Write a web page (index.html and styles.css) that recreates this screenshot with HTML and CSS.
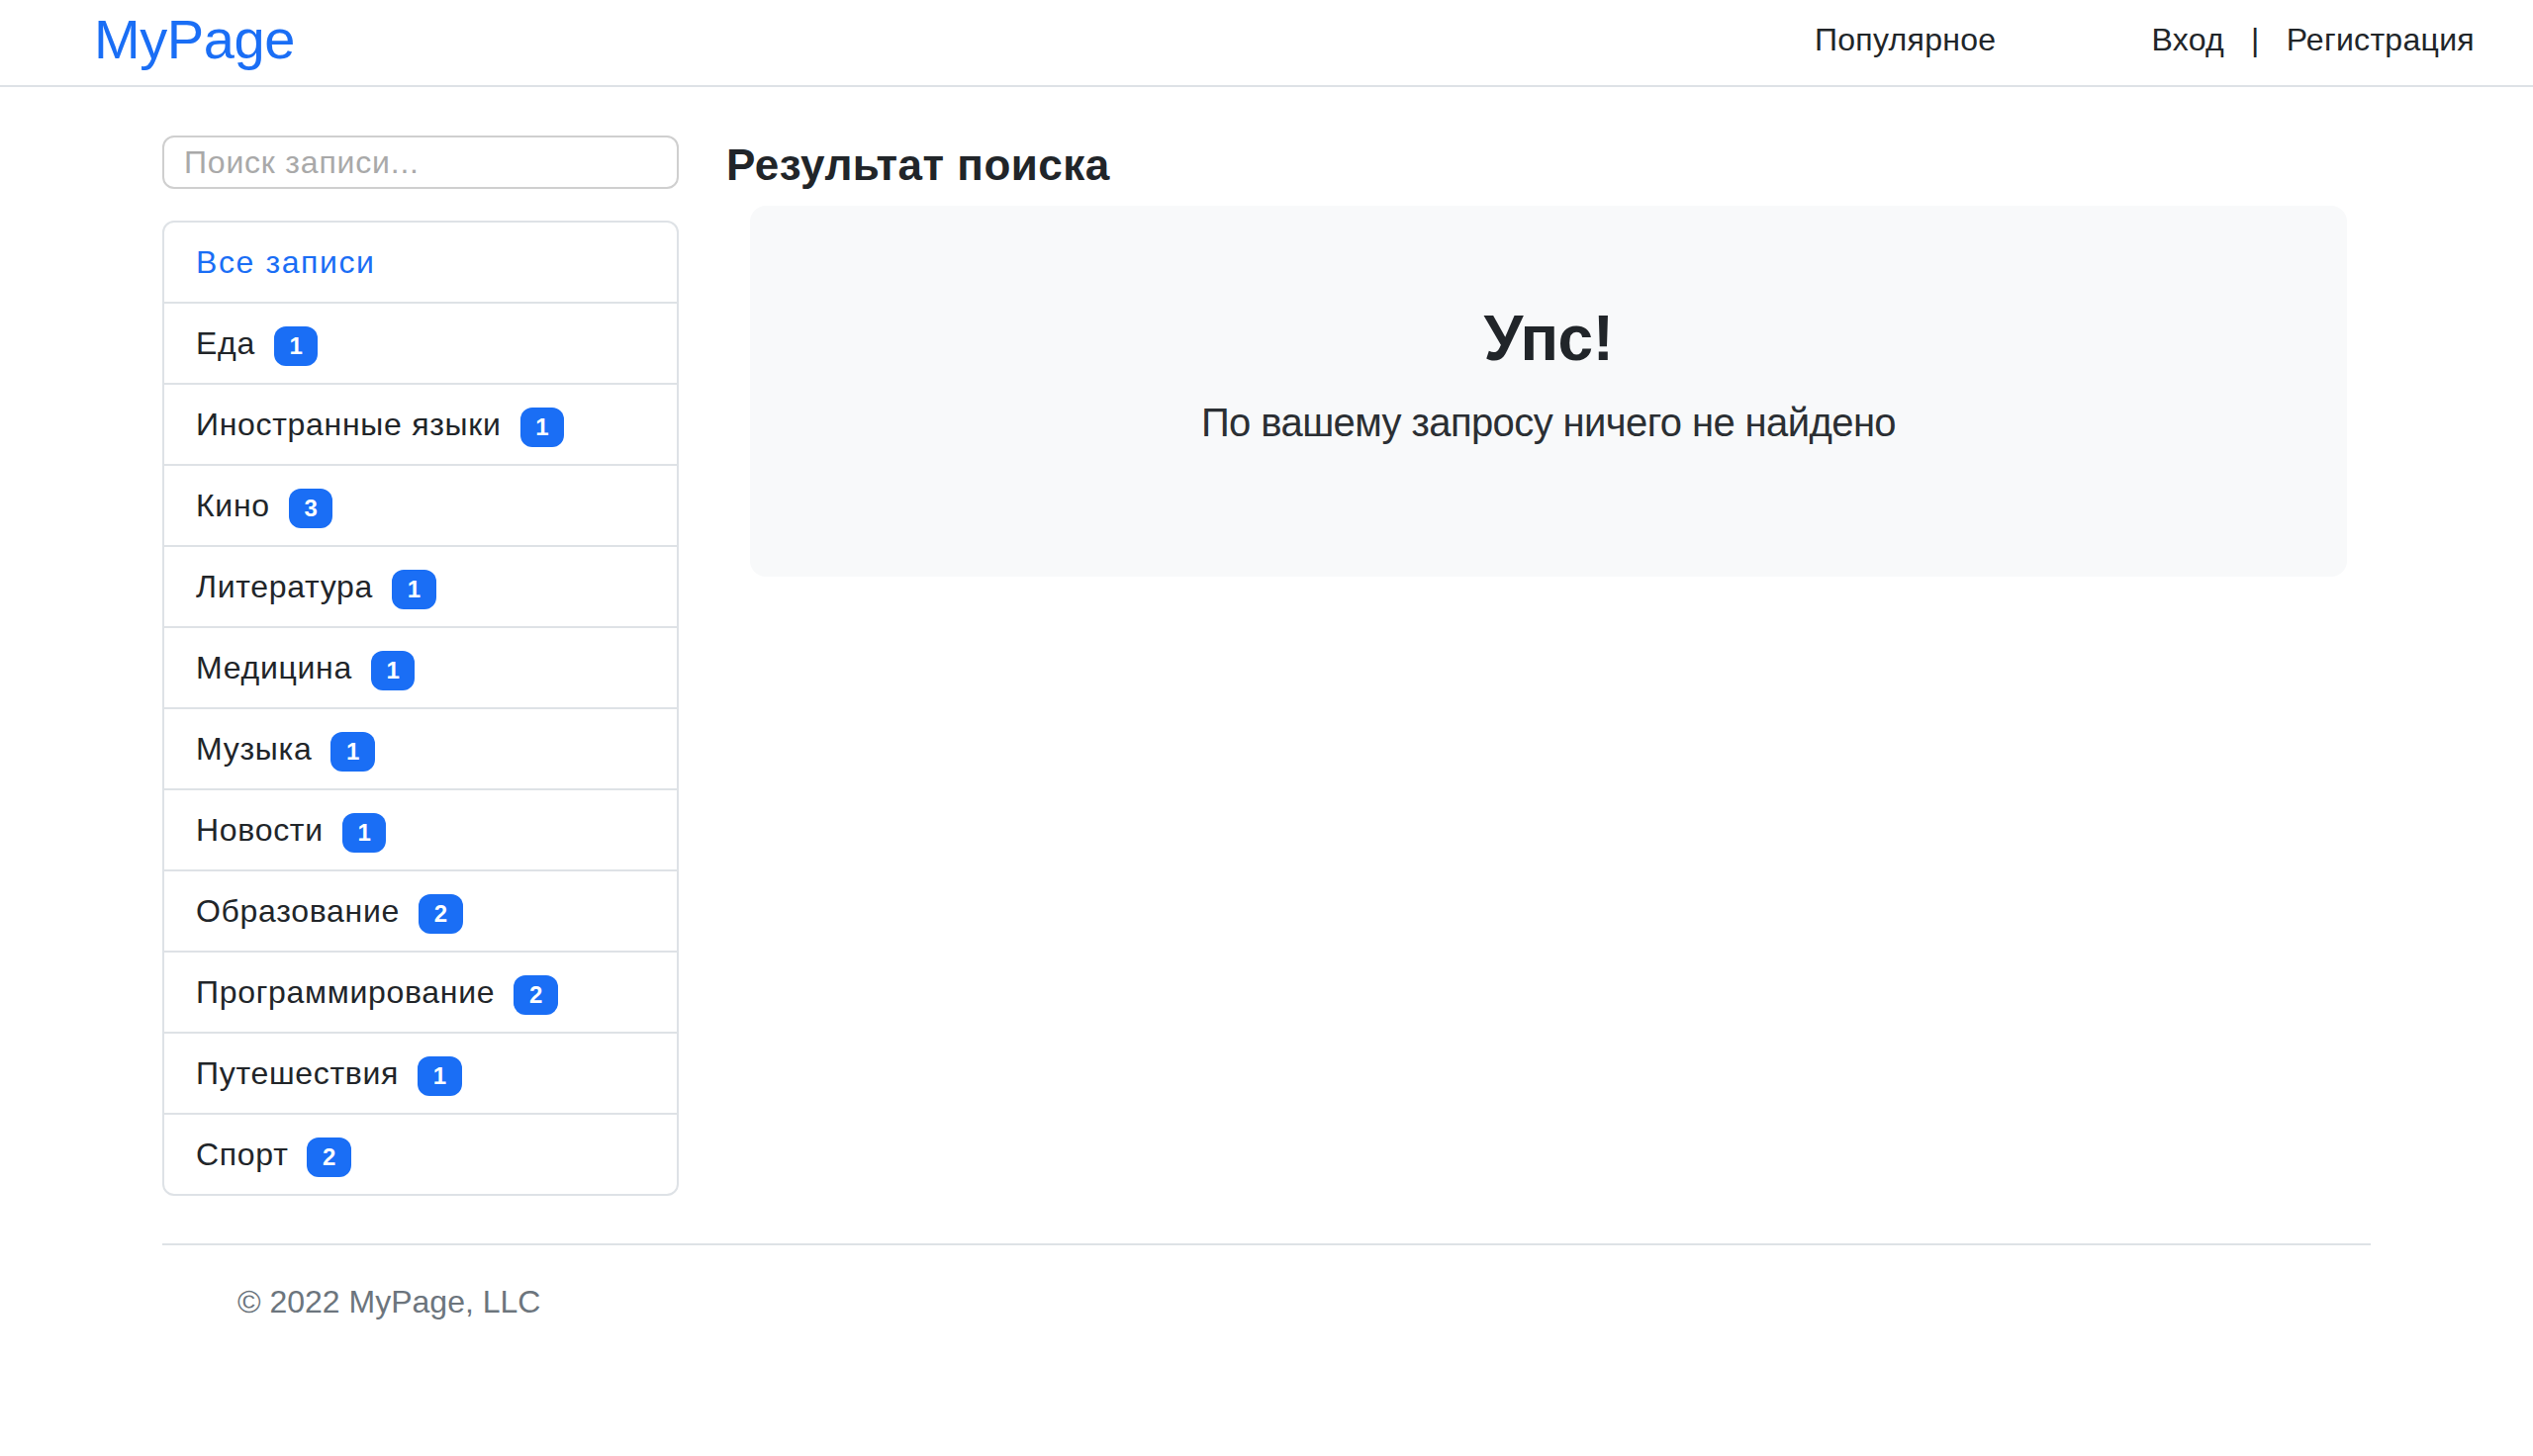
FILE: index.html
```html
<!DOCTYPE html>
<html lang="ru">
<head>
<meta charset="utf-8">
<title>MyPage</title>
<link rel="stylesheet" href="styles.css">
</head>
<body>
<header class="navbar">
  <a class="brand" href="#">MyPage</a>
  <nav class="nav-links">
    <a class="nav-link popular" href="#">Популярное</a>
    <a class="nav-link" href="#">Вход</a>
    <span class="sep">|</span>
    <a class="nav-link" href="#">Регистрация</a>
  </nav>
</header>
<main class="container">
  <div class="row">
    <aside class="sidebar">
      <input class="search" type="text" placeholder="Поиск записи...">
      <ul class="list-group">
        <li class="list-item"><a class="active-link" href="#">Все записи</a></li>
        <li class="list-item">Еда<span class="badge">1</span></li>
        <li class="list-item">Иностранные языки<span class="badge">1</span></li>
        <li class="list-item">Кино<span class="badge">3</span></li>
        <li class="list-item">Литература<span class="badge">1</span></li>
        <li class="list-item">Медицина<span class="badge">1</span></li>
        <li class="list-item">Музыка<span class="badge">1</span></li>
        <li class="list-item">Новости<span class="badge">1</span></li>
        <li class="list-item">Образование<span class="badge">2</span></li>
        <li class="list-item">Программирование<span class="badge">2</span></li>
        <li class="list-item">Путешествия<span class="badge">1</span></li>
        <li class="list-item">Спорт<span class="badge">2</span></li>
      </ul>
    </aside>
    <section class="content">
      <h3 class="title">Результат поиска</h3>
      <div class="jumbo">
        <h2 class="oops">Упс!</h2>
        <p class="lead">По вашему запросу ничего не найдено</p>
      </div>
    </section>
  </div>
  <footer class="footer">
    <p class="copy">© 2022 MyPage, LLC</p>
  </footer>
</main>
</body>
</html>
```
FILE: styles.css
```css
* {
  box-sizing: border-box;
}

body {
  margin: 0;
  font-family: "Liberation Sans", Arial, sans-serif;
  color: #212529;
  background: #fff;
}

a {
  text-decoration: none;
}

.navbar {
  display: flex;
  align-items: flex-start;
  height: 88px;
  padding: 0 59px 0 95px;
  border-bottom: 2px solid #dee2e6;
}

.brand {
  font-size: 56px;
  line-height: 64px;
  margin-top: 8px;
  color: #1a6ef5;
  letter-spacing: -0.4px;
}

.nav-links {
  margin-left: auto;
  margin-top: 16px;
  display: flex;
  font-size: 32px;
  line-height: 48px;
  letter-spacing: 0.3px;
}

.nav-link {
  color: #212529;
}

.popular {
  margin-right: 157px;
}

.sep {
  margin: 0 27px;
  color: #212529;
}

.container {
  width: 2232px;
  margin: 0 auto;
  padding-top: 49px;
}

.row {
  display: grid;
  grid-template-columns: 522px 1fr;
  column-gap: 48px;
  align-items: start;
}

.search {
  display: block;
  width: 100%;
  height: 54px;
  margin: 0 0 32px;
  padding: 0 20px;
  border: 2px solid #cfcfcf;
  border-radius: 12px;
  font-family: inherit;
  font-size: 32px;
  letter-spacing: 0.8px;
  color: #212529;
  outline: none;
}

.search::placeholder {
  color: #a9a9a9;
}

.list-group {
  list-style: none;
  margin: 0;
  padding: 0;
  border: 2px solid #dee2e6;
  border-radius: 12px;
}

.list-item {
  padding: 16px 32px;
  font-size: 32px;
  line-height: 48px;
  letter-spacing: 0.7px;
  border-bottom: 2px solid #dee2e6;
}

.list-item:last-child {
  border-bottom: none;
}

.active-link {
  color: #1a6ef5;
  letter-spacing: 1.6px;
}

.badge {
  display: inline-block;
  margin-left: 19px;
  padding: 8.4px 15.6px;
  font-size: 24px;
  font-weight: 700;
  line-height: 1;
  letter-spacing: 0;
  color: #fff;
  background: #1a6ef5;
  border-radius: 12px;
  vertical-align: baseline;
}

.title {
  margin: 4px 0 14px;
  font-size: 44px;
  font-weight: 700;
  line-height: 1.2;
  letter-spacing: 0.5px;
}

.jumbo {
  margin: 0 24px;
  padding: 96px 96px 126px;
  background: #f8f9fa;
  border-radius: 16px;
  text-align: center;
}

.oops {
  margin: 0 0 16px;
  font-size: 64px;
  font-weight: 700;
  line-height: 1.2;
  letter-spacing: -0.5px;
}

.lead {
  margin: 0;
  font-size: 40px;
  font-weight: 300;
  line-height: 1.5;
  letter-spacing: -0.6px;
  color: #2b2f33;
}

.footer {
  margin-top: 48px;
  border-top: 2px solid #dee2e6;
  padding: 33px 0 0 76px;
}

.copy {
  margin: 0;
  font-size: 32px;
  line-height: 48px;
  color: #6c757d;
}
```
